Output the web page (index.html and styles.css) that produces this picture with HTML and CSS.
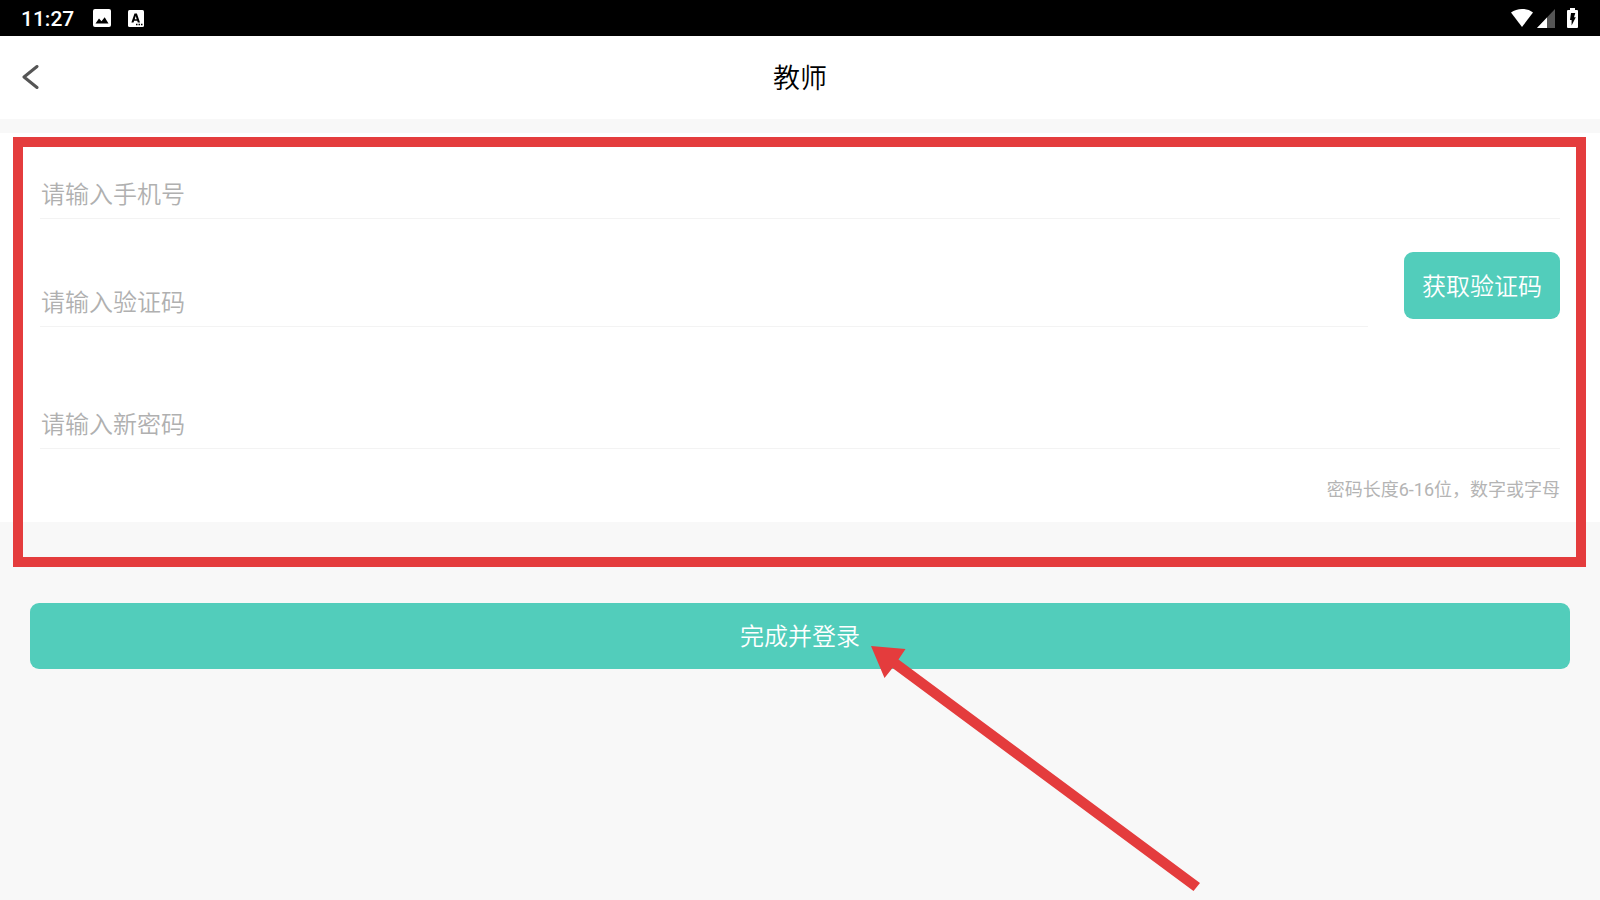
FILE: index.html
```html
<!DOCTYPE html>
<html lang="zh-CN">
<head>
<meta charset="utf-8">
<meta name="viewport" content="width=device-width, initial-scale=1">
<title>教师</title>
<link rel="stylesheet" href="styles.css">
</head>
<body>
<div class="status-bar">
  <div class="status-left">
    <time class="clock">11:27</time>
    <svg class="icon-photo" width="18" height="18" viewBox="0 0 18 18" aria-hidden="true">
      <rect width="18" height="18" rx="2" fill="#fff"/>
      <path d="M2.500 14.500L6 9.500L8.500 12.200L11.700 8.300L15.500 14.500Z" fill="#000"/>
    </svg>
    <svg class="icon-input" width="16" height="17" viewBox="0 0 16 17" aria-hidden="true">
      <rect width="16" height="17" rx="1.500" fill="#fff"/>
      <path d="M6.500 3.500H8.900L12 12.500H9.800L9.200 10.800H6.100L5.500 12.500H3.400ZM7.700 6L6.700 9.200H8.700Z" fill="#000" fill-rule="evenodd"/>
      <path d="M8 14.500h1.500M10.500 14.500h1.500M13 14.500h1.500" stroke="#000" stroke-width="1.400"/>
    </svg>
  </div>
  <div class="status-right">
    <svg width="24" height="20" viewBox="0 0 24 20" aria-hidden="true">
      <path d="M1 4.500C7-.300 17-.300 23 4.500L12 19Z" fill="#fff"/>
    </svg>
    <svg width="18" height="19" viewBox="0 0 18 19" aria-hidden="true">
      <path d="M18 0V19H0Z" fill="#555"/>
      <path d="M10 8.400V19H0Z" fill="#fff"/>
    </svg>
    <svg class="icon-battery" width="11" height="20" viewBox="0 0 11 20" aria-hidden="true">
      <path d="M3 0H8V2H10Q11 2 11 3V19Q11 20 10 20H1Q0 20 0 19V3Q0 2 1 2H3Z" fill="#fff"/>
      <path d="M4 5H8.300L7 9.200H8.800L4.600 17.500V12H3Z" fill="#000"/>
    </svg>
  </div>
</div>

<header class="header">
  <button class="back" type="button" aria-label="返回">
    <svg width="18" height="26" viewBox="0 0 18 26" aria-hidden="true">
      <path d="M16 1.500L3 12L16 22.500" fill="none" stroke="#555" stroke-width="3" stroke-linecap="round" stroke-linejoin="round"/>
    </svg>
  </button>
  <h1 class="title">教师</h1>
</header>

<form class="form">
  <section class="fields">
    <input class="field" type="tel" placeholder="请输入手机号" aria-label="手机号">
    <div class="code-row">
      <input class="field" type="text" placeholder="请输入验证码" aria-label="验证码">
      <button class="button code-button" type="button">获取验证码</button>
    </div>
    <input class="field" type="password" placeholder="请输入新密码" aria-label="新密码" aria-describedby="hint">
    <p class="hint" id="hint">密码长度6-16位，数字或字母</p>
    <div class="frame"></div>
  </section>
  <div class="submit-area">
    <button class="button submit" type="submit">完成并登录</button>
    <svg class="arrow" width="330" height="246" viewBox="0 0 330 246" aria-hidden="true">
      <path d="M0 0L34.500 3L27.500 13.500L329 237L322.500 245L21.500 22L13.500 32Z" fill="#e43c3d"/>
    </svg>
  </div>
</form>
</body>
</html>
```
FILE: styles.css
```css
* {
  box-sizing: border-box;
}

body {
  margin: 0;
  min-height: 100vh;
  overflow-x: hidden;
  background: #f8f8f8;
  font-family: Roboto, "Noto Sans CJK SC", sans-serif;
}

.status-bar {
  display: flex;
  align-items: center;
  justify-content: space-between;
  height: 36px;
  padding: 0 22px 0 21px;
  background: #000;
  color: #fff;
}

.status-left,
.status-right {
  display: flex;
  align-items: center;
}

.status-right {
  gap: 3px;
}

.clock {
  margin-right: 19px;
  padding-top: 2px;
  font-size: 21px;
  font-weight: 500;
  line-height: 34px;
}

.icon-photo {
  margin-right: 17px;
}

.icon-battery {
  margin-left: 9px;
}

.header {
  display: grid;
  grid-template-columns: 60px 1fr 60px;
  align-items: center;
  height: 83px;
  background: #fff;
}

.back {
  display: flex;
  align-items: center;
  height: 60px;
  padding: 0 0 0 21px;
  border: 0;
  background: none;
}

.title {
  margin: 0;
  padding-top: 2px;
  color: #000;
  font-size: 27px;
  font-weight: 350;
  line-height: 40px;
  text-align: center;
}

.fields {
  position: relative;
  display: flex;
  flex-direction: column;
  margin-top: 14px;
  padding: 37px 40px 18px;
  background: #fff;
}

.field {
  width: 100%;
  height: 49px;
  padding: 2px 1px 0;
  border: 0;
  border-bottom: 1px solid #f3f3f3;
  outline: 0;
  background: none;
  color: #333;
  font-family: inherit;
  font-size: 24px;
  font-weight: 350;
}

.field::placeholder {
  color: #b0b0b0;
}

.code-row {
  display: flex;
  align-items: flex-end;
  gap: 36px;
  height: 75px;
  margin: 33px 0 73px;
}

.code-row .field {
  flex: 1;
}

.button {
  height: 66px;
  padding: 0 18px 3px;
  border: 0;
  border-radius: 9px;
  background: #52cdbb;
  color: #fff;
  font-family: inherit;
  font-size: 24px;
  font-weight: 350;
}

.code-button {
  align-self: flex-start;
  height: 67px;
}

.hint {
  margin: 27px 0 0;
  color: #b4b4b4;
  font-size: 18px;
  line-height: 28px;
  text-align: right;
}

.frame {
  position: absolute;
  inset: 4px 14px -45px 13px;
  border: 10px solid #e43c3d;
  pointer-events: none;
}

.submit-area {
  position: relative;
  margin-top: 81px;
  padding: 0 30px;
}

.submit {
  display: block;
  width: 100%;
}

.arrow {
  position: absolute;
  top: 43px;
  left: calc(50% + 71px);
  pointer-events: none;
}
```
